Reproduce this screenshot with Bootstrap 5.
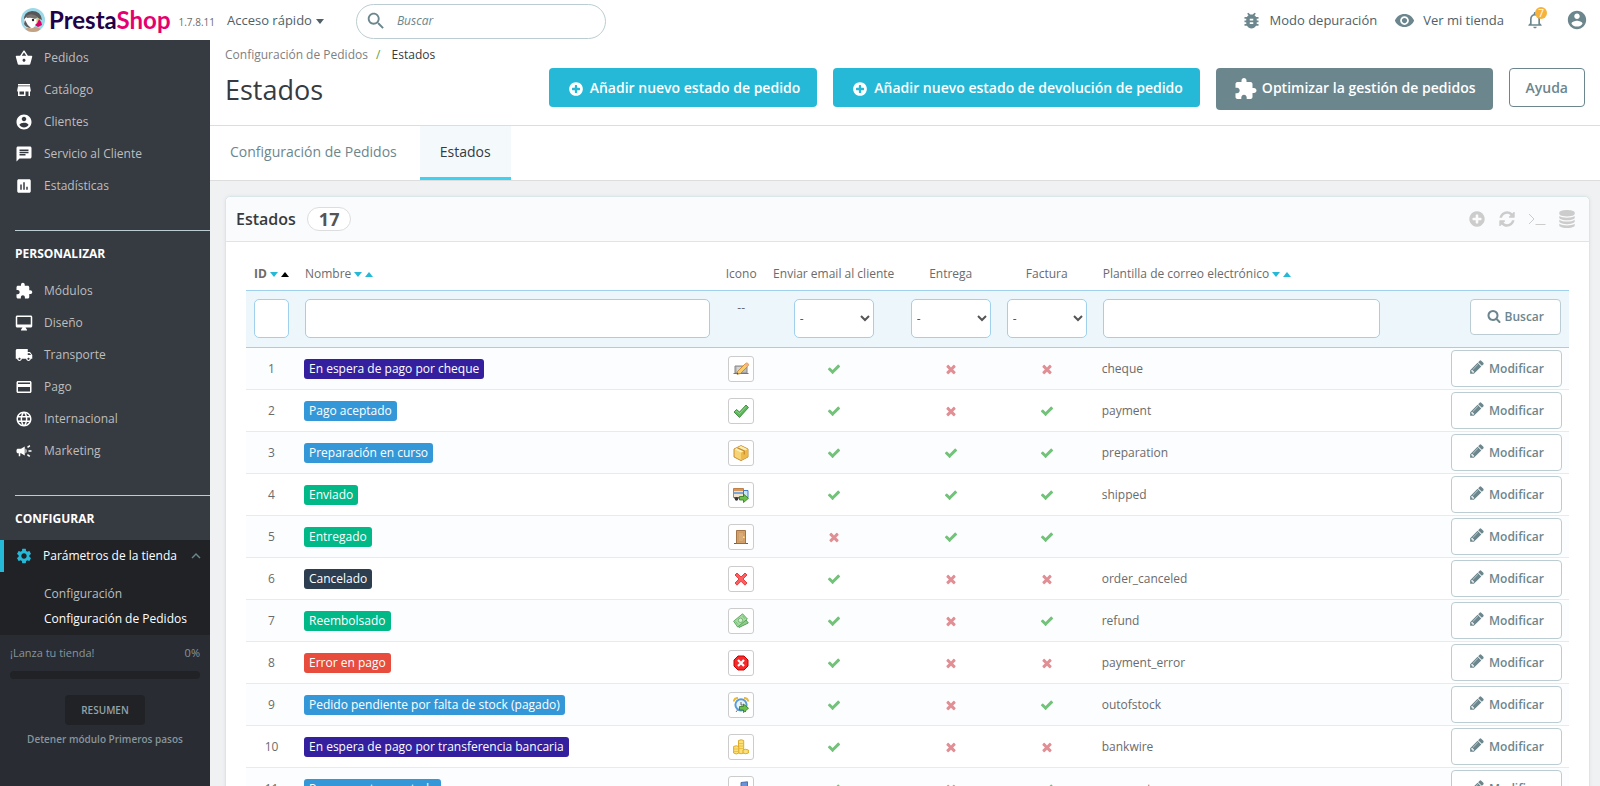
<!DOCTYPE html>
<html lang="es">
<head>
<meta charset="utf-8">
<meta name="viewport" content="width=device-width, initial-scale=1">
<title>Estados • PrestaShop</title>
<link href="https://cdn.jsdelivr.net/npm/bootstrap@5.3.0/dist/css/bootstrap.min.css" rel="stylesheet">
<style>
:root { --slate: #6c868e; --cyan: #25b9d7; --line: #bbcdd2; --side: #363a41; }
body { font-family: "Open Sans", "Noto Sans", sans-serif; font-size: 12px; line-height: 18px; color: #6b6b6b; background: #eff1f2; }
a { text-decoration: none; color: inherit; }
svg { fill: currentColor; flex: none; }
.btn { --bs-btn-font-size: 14px; --bs-btn-line-height: 21px; --bs-btn-font-weight: 600; --bs-btn-border-radius: 4px; white-space: nowrap; }

/* Top bar */
.topbar { height: 40px; background: #fff; color: #4e6167; font-size: 13px; }
.topbar svg { color: var(--slate); }
.topbar nav { gap: 17px; padding-right: 12px; }
.wordmark { font: 700 24px/24px Lato, sans-serif; color: #1f0249; }
.wordmark span { color: #e6006f; }
.version { font-size: 10px; color: #6b6b6b; margin: 0 12px 0 8px; }
.quick { border: 0; background: none; padding: 0; color: #4e6167; }
.quick::after { vertical-align: 1px; margin-left: 4px; border-width: 4px; border-top-width: 5px; border-bottom: 0; }
.finder { width: 250px; height: 35px; border: 1px solid var(--line); border-radius: 18px; background: #fff; margin: 2px 0 0 32px; }
.finder input { border: 0; outline: 0; width: 100%; font-size: 12px; font-style: italic; background: none; }
.finder input::placeholder { color: var(--slate); }
.count { top: -3px; right: -2px; width: 12px; height: 12px; border-radius: 50%; background: #f7b23c; color: #fff; font-size: 10px; line-height: 12px; }

/* Sidebar */
.side { width: 210px; background: var(--side); color: #bebebe; padding-top: 2px; }
.side .entry { display: flex; align-items: center; gap: 11px; height: 32px; padding-left: 15px; white-space: nowrap; }
.side .entry svg { color: #fff; }
.side h2 { font-size: 12px; line-height: 18px; font-weight: 700; color: #fff; margin: 28px 0 0 15px; padding: 14px 0 12px; border-top: 1px solid var(--line); text-transform: uppercase; }
.side .current { background: #202226; }
.side .current .entry { gap: 10px; color: #fff; border-left: 4px solid var(--cyan); padding: 0 5px 0 11px; }
.side .current .entry .gear { color: var(--cyan); }
.side .current .entry .fold { color: var(--slate); }
.side .subs { padding: 9px 0 4px 44px; line-height: 25px; }
.start { background: #292c33; color: #86969c; padding: 9px 10px; font-size: 11px; }
.start .meter { height: 8px; border-radius: 4px; background: #202226; margin: 9px 0 16px; }
.start .btn { --bs-btn-bg: #202226; --bs-btn-color: #93a3a9; --bs-btn-font-size: 10px; --bs-btn-line-height: 16px; width: 80px; }
.start .stop { font-size: 10px; font-weight: 600; margin-top: 5px; }

/* Page heading */
.heading { background: #fff; border-bottom: 1px solid #ddd; padding: 6px 15px 0; height: 86px; }
.crumbs { color: #808080; }
.crumbs .here { color: #363a41; }
.crumbs .bar { color: #5ba13a; margin: 0 8px 0 5px; }
.heading h1 { font-size: 27px; line-height: 38px; font-weight: 400; color: #363a41; margin: 7px 0 0; }
.actions { padding-top: 22px; }
.btn-cyan { --bs-btn-bg: var(--cyan); --bs-btn-color: #fff; --bs-btn-padding-y: 8px; --bs-btn-padding-x: 16px; }
.btn-slate { --bs-btn-bg: var(--slate); --bs-btn-color: #fff; --bs-btn-padding-y: 8px; --bs-btn-padding-x: 16px; }
.btn-help { --bs-btn-bg: #fff; --bs-btn-color: var(--slate); --bs-btn-border-color: var(--slate); --bs-btn-padding-y: 8px; --bs-btn-padding-x: 16px; }
.tabs { background: #fff; border-bottom: 1px solid #ddd; font-size: 14px; color: var(--slate); height: 55px; gap: 3px; }
.tabs a { padding: 15px 20px 0; line-height: 21px; }
.tabs a.on { background: #f4f9fb; color: #363a41; border-bottom: 3px solid #3ed2f0; }

/* Panel */
.panel { margin: 15px 10px 0 15px; border-radius: 5px 5px 0 0; border: 1px solid #dbe6e9; background: #fff; box-shadow: 0 0 4px rgba(0, 0, 0, .06); }
.panel-top { height: 45px; padding: 0 13px 0 10px; background: #fafbfc; border-bottom: 1px solid #dbe6e9; border-radius: 5px 5px 0 0; color: #363a41; }
.panel-top h2 { font-size: 16px; line-height: 24px; font-weight: 600; margin: 0; }
.total { border: 1px solid #ddd; border-radius: 12px; background: #fff; color: #555; font-size: 18px; font-weight: 700; line-height: 22px; padding: 0 11px; margin-left: 11px; }
.tools { color: #ccc; gap: 12px; }
.list-wrap { padding: 0 20px; }

/* List of states */
.states { table-layout: fixed; width: 100%; }
.states th { font-weight: 400; height: 48px; padding: 15px 8px 0; vertical-align: top; white-space: nowrap; line-height: 33px; }
.states td { padding: 0 7px; height: 42px; border-bottom: 1px solid #e6ebee; }
.states .filter td { height: 57px; padding: 8px; background: #ecf6fb; border-top: 1px solid #a0d0eb; border-bottom: 1px solid #a0d0eb; vertical-align: top; }
.states tbody tr:nth-child(odd) td { background: #fcfdfe; }
.states .field { display: block; width: 100%; height: 39px; border: 1px solid #a0d0eb; border-radius: 5px; background: #fff; color: #555; padding: 0 4px; }
.states select.field { width: 80px; padding: 0 1px; margin: 0 auto; }
.c-id { width: 51px; } .c-name { width: 31.8%; } .c-icon { width: 47px; } .c-mail { width: 138px; }
.c-flag { width: 96px; } .c-tpl { width: 22.2%; }
.state { display: inline-block; color: #fff; border-radius: 3px; padding: 1px 5px; vertical-align: middle; }
.pic { display: inline-flex; width: 26px; height: 26px; border: 1px solid #ccc; border-radius: 3px; background: #fff; align-items: center; justify-content: center; vertical-align: middle; }
.yes { color: #72c279; } .no { color: #e08f95; }
.btn-row { --bs-btn-bg: #fff; --bs-btn-color: var(--slate); --bs-btn-border-color: var(--line); --bs-btn-font-size: 12px; --bs-btn-line-height: 18px; --bs-btn-padding-y: 8px; --bs-btn-padding-x: 16px; }
.btn-row.wide { --bs-btn-padding-x: 17px; }
.btn-row svg { vertical-align: -2px; }
.up, .down { display: inline-block; border: 4px solid transparent; color: var(--cyan); margin-left: 3px; vertical-align: middle; height: 0; width: 0; }
.down { border-top: 5px solid; border-bottom: 0; } .up { border-bottom: 5px solid; border-top: 0; }
.up.now { color: #000; }
</style>
</head>
<body>
<svg class="d-none">
  <symbol id="basket" viewBox="0 0 24 24"><path d="M17.21 9l-4.38-6.56c-.19-.28-.51-.42-.83-.42-.32 0-.64.14-.83.43L6.79 9H2c-.55 0-1 .45-1 1 0 .09.01.18.04.27l2.54 9.27c.23.84 1 1.46 1.92 1.46h13c.92 0 1.69-.62 1.93-1.46l2.54-9.27L23 10c0-.55-.45-1-1-1h-4.79zM9 9l3-4.4L15 9H9zm3 8c-1.1 0-2-.9-2-2s.9-2 2-2 2 .9 2 2-.9 2-2 2z"/></symbol>
  <symbol id="store" viewBox="0 0 24 24"><path d="M20 4H4v2h16V4zm1 10v-2l-1-5H4l-1 5v2h1v6h10v-6h4v6h2v-6h1zm-9 4H6v-4h6v4z"/></symbol>
  <symbol id="person" viewBox="0 0 24 24"><path d="M12 2C6.48 2 2 6.48 2 12s4.48 10 10 10 10-4.48 10-10S17.52 2 12 2zm0 3c1.66 0 3 1.34 3 3s-1.34 3-3 3-3-1.34-3-3 1.34-3 3-3zm0 14.2c-2.5 0-4.71-1.28-6-3.22.03-1.99 4-3.08 6-3.08 1.99 0 5.97 1.09 6 3.08-1.29 1.94-3.5 3.22-6 3.22z"/></symbol>
  <symbol id="chat" viewBox="0 0 24 24"><path d="M20 2H4c-1.1 0-1.99.9-1.99 2L2 22l4-4h14c1.1 0 2-.9 2-2V4c0-1.1-.9-2-2-2zM6 9h12v2H6V9zm8 5H6v-2h8v2zm4-6H6V6h12v2z"/></symbol>
  <symbol id="stats" viewBox="0 0 24 24"><path d="M19 3H5c-1.1 0-2 .9-2 2v14c0 1.1.9 2 2 2h14c1.1 0 2-.9 2-2V5c0-1.1-.9-2-2-2zM9 17H7v-7h2v7zm4 0h-2V7h2v10zm4 0h-2v-4h2v4z"/></symbol>
  <symbol id="puzzle" viewBox="0 0 24 24"><path d="M20.5 11H19V7c0-1.1-.9-2-2-2h-4V3.500C13 2.120 11.880 1 10.500 1S8 2.120 8 3.500V5H4c-1.100 0-1.990.9-1.990 2v3.800H3.500c1.490 0 2.700 1.210 2.700 2.700s-1.210 2.700-2.700 2.700H2V20c0 1.100.9 2 2 2h3.800v-1.500c0-1.490 1.210-2.700 2.700-2.700 1.490 0 2.700 1.210 2.700 2.700V22H17c1.100 0 2-.9 2-2v-4h1.500c1.380 0 2.500-1.120 2.500-2.500S21.880 11 20.500 11z"/></symbol>
  <symbol id="desktop" viewBox="0 0 24 24"><path d="M21 2H3c-1.100 0-2 .9-2 2v12c0 1.100.9 2 2 2h7l-2 3v1h8v-1l-2-3h7c1.100 0 2-.9 2-2V4c0-1.100-.9-2-2-2zm0 12H3V4h18v10z"/></symbol>
  <symbol id="truck" viewBox="0 0 24 24"><path d="M20 8h-3V4H3c-1.100 0-2 .9-2 2v11h2c0 1.660 1.340 3 3 3s3-1.340 3-3h6c0 1.660 1.340 3 3 3s3-1.340 3-3h2v-5l-3-4zM6 18.500c-.83 0-1.500-.67-1.500-1.500s.67-1.500 1.500-1.500 1.500.67 1.500 1.500-.67 1.500-1.500 1.500zm13.500-9l1.960 2.500H17V9.500h2.500zm-1.500 9c-.83 0-1.500-.67-1.500-1.500s.67-1.500 1.500-1.500 1.500.67 1.500 1.500-.67 1.500-1.500 1.500z"/></symbol>
  <symbol id="cardpay" viewBox="0 0 24 24"><path d="M20 4H4c-1.110 0-1.990.89-1.990 2L2 18c0 1.110.89 2 2 2h16c1.110 0 2-.89 2-2V6c0-1.110-.89-2-2-2zm0 14H4v-6h16v6zm0-10H4V6h16v2z"/></symbol>
  <symbol id="globe" viewBox="0 0 24 24"><path d="M11.990 2C6.470 2 2 6.480 2 12s4.470 10 9.990 10C17.520 22 22 17.520 22 12S17.520 2 11.990 2zm6.930 6h-2.950c-.32-1.250-.78-2.450-1.380-3.560 1.840.63 3.370 1.910 4.330 3.560zM12 4.040c.83 1.200 1.480 2.530 1.910 3.960h-3.820c.43-1.430 1.080-2.760 1.910-3.960zM4.260 14C4.100 13.360 4 12.690 4 12s.1-1.360.26-2h3.380c-.08.66-.14 1.320-.14 2 0 .68.06 1.340.14 2H4.260zm.82 2h2.950c.32 1.250.78 2.450 1.380 3.560-1.840-.63-3.370-1.900-4.330-3.560zm2.950-8H5.080c.96-1.660 2.490-2.930 4.330-3.560C8.810 5.550 8.350 6.750 8.030 8zM12 19.960c-.83-1.200-1.480-2.530-1.910-3.960h3.820c-.43 1.430-1.080 2.760-1.910 3.960zM14.340 14H9.660c-.09-.66-.16-1.320-.16-2 0-.68.07-1.350.16-2h4.680c.09.65.16 1.320.16 2 0 .68-.07 1.340-.16 2zm.25 5.560c.6-1.110 1.060-2.310 1.380-3.560h2.950c-.96 1.650-2.490 2.930-4.330 3.560zM16.360 14c.08-.66.14-1.320.14-2 0-.68-.06-1.340-.14-2h3.380c.16.64.26 1.310.26 2s-.1 1.360-.26 2h-3.380z"/></symbol>
  <symbol id="horn" viewBox="0 0 24 24"><path d="M18 11v2h4v-2h-4zm-2 6.610c.96.71 2.210 1.650 3.200 2.390.4-.53.8-1.070 1.200-1.600-.99-.74-2.240-1.680-3.200-2.400-.4.54-.8 1.080-1.200 1.610zM20.400 5.600c-.4-.53-.8-1.070-1.200-1.600-.99.74-2.240 1.680-3.200 2.400.4.53.8 1.070 1.200 1.600.96-.72 2.210-1.650 3.200-2.400zM4 9c-1.100 0-2 .9-2 2v2c0 1.100.9 2 2 2h1v4h2v-4h1l5 3V6L8 9H4zm11.500 3c0-1.330-.58-2.530-1.500-3.350v6.690c.92-.81 1.500-2.010 1.500-3.340z"/></symbol>
  <symbol id="gear" viewBox="0 0 24 24"><path d="M19.140 12.940c.04-.3.06-.61.06-.94 0-.32-.02-.64-.07-.94l2.030-1.580c.18-.14.23-.41.12-.61l-1.920-3.320c-.12-.22-.37-.29-.59-.22l-2.390.96c-.5-.38-1.030-.7-1.620-.94l-.36-2.540c-.04-.24-.24-.41-.48-.41h-3.840c-.24 0-.43.17-.47.41l-.36 2.540c-.59.24-1.130.57-1.620.94l-2.390-.96c-.22-.08-.47 0-.59.22L2.740 8.870c-.12.21-.08.47.12.61l2.030 1.580c-.05.3-.09.63-.09.94s.02.64.07.94l-2.030 1.580c-.18.14-.23.41-.12.61l1.920 3.320c.12.22.37.29.59.22l2.390-.96c.5.38 1.030.7 1.620.94l.36 2.540c.05.24.24.41.48.41h3.840c.24 0 .44-.17.47-.41l.36-2.540c.59-.24 1.130-.56 1.620-.94l2.390.96c.22.08.47 0 .59-.22l1.920-3.320c.12-.22.07-.47-.12-.61l-2.010-1.580zM12 15.600c-1.980 0-3.600-1.620-3.600-3.600s1.620-3.600 3.600-3.600 3.600 1.620 3.600 3.600-1.620 3.600-3.600 3.600z"/></symbol>
  <symbol id="fold" viewBox="0 0 24 24"><path d="M12 8l-6 6 1.410 1.410L12 10.830l4.590 4.580L18 14z"/></symbol>
  <symbol id="lens" viewBox="0 0 24 24"><path d="M15.500 14h-.79l-.28-.27C15.410 12.590 16 11.110 16 9.500 16 5.910 13.090 3 9.500 3S3 5.910 3 9.500 5.910 16 9.500 16c1.610 0 3.090-.59 4.230-1.570l.27.28v.79l5 4.990L20.490 19l-4.990-5zm-6 0C7.010 14 5 11.990 5 9.500S7.010 5 9.500 5 14 7.010 14 9.500 11.990 14 9.500 14z"/></symbol>
  <symbol id="bug" viewBox="0 0 24 24"><path d="M20 8h-2.810c-.45-.78-1.070-1.450-1.820-1.960L17 4.410 15.590 3l-2.170 2.170C12.960 5.060 12.490 5 12 5c-.49 0-.96.06-1.410.17L8.410 3 7 4.410l1.620 1.630C7.880 6.550 7.260 7.220 6.810 8H4v2h2.090c-.05.33-.09.66-.09 1v1H4v2h2v1c0 .34.04.67.09 1H4v2h2.810c1.040 1.790 2.970 3 5.190 3s4.150-1.210 5.190-3H20v-2h-2.090c.05-.33.09-.66.09-1v-1h2v-2h-2v-1c0-.34-.04-.67-.09-1H20V8zm-6 8h-4v-2h4v2zm0-4h-4v-2h4v2z"/></symbol>
  <symbol id="eye" viewBox="0 0 24 24"><path d="M12 4.500C7 4.500 2.730 7.610 1 12c1.730 4.390 6 7.500 11 7.500s9.270-3.110 11-7.500c-1.730-4.390-6-7.500-11-7.500zM12 17c-2.760 0-5-2.240-5-5s2.240-5 5-5 5 2.240 5 5-2.240 5-5 5zm0-8c-1.660 0-3 1.340-3 3s1.340 3 3 3 3-1.340 3-3-1.340-3-3-3z"/></symbol>
  <symbol id="bell" viewBox="0 0 24 24"><path d="M12 22c1.100 0 2-.9 2-2h-4c0 1.100.89 2 2 2zm6-6v-5c0-3.070-1.640-5.640-4.500-6.320V4c0-.83-.67-1.500-1.500-1.500s-1.500.67-1.500 1.500v.68C7.630 5.360 6 7.920 6 11v5l-2 2v1h16v-1l-2-2zm-2 1H8v-6c0-2.480 1.510-4.500 4-4.500s4 2.020 4 4.500v6z"/></symbol>
  <symbol id="check" viewBox="0 0 1792 1792"><path d="M1671 566q0 40-28 68l-724 724-136 136q-28 28-68 28t-68-28l-136-136-362-362q-28-28-28-68t28-68l136-136q28-28 68-28t68 28l294 295 656-657q28-28 68-28t68 28l136 136q28 28 28 68z"/></symbol>
  <symbol id="cross" viewBox="0 0 1792 1792"><path d="M1490 1322q0 40-28 68l-136 136q-28 28-68 28t-68-28l-294-294-294 294q-28 28-68 28t-68-28l-136-136q-28-28-28-68t28-68l294-294-294-294q-28-28-28-68t28-68l136-136q28-28 68-28t68 28l294 294 294-294q28-28 68-28t68 28l136 136q28 28 28 68t-28 68l-294 294 294 294q28 28 28 68z"/></symbol>
  <symbol id="plus" viewBox="0 0 1792 1792"><path d="M1344 960v-128q0-26-19-45t-45-19h-256v-256q0-26-19-45t-45-19h-128q-26 0-45 19t-19 45v256h-256q-26 0-45 19t-19 45v128q0 26 19 45t45 19h256v256q0 26 19 45t45 19h128q26 0 45-19t19-45v-256h256q26 0 45-19t19-45zm320-64q0 209-103 385.500t-279.500 279.500-385.500 103-385.500-103-279.500-279.500-103-385.500 103-385.500 279.500-279.500 385.500-103 385.500 103 279.500 279.500 103 385.500z"/></symbol>
  <symbol id="find" viewBox="0 0 1792 1792"><path d="M1216 832q0-185-131.500-316.500t-316.500-131.500-316.500 131.500-131.500 316.500 131.500 316.500 316.500 131.500 316.500-131.500 131.500-316.500zm512 832q0 52-38 90t-90 38q-54 0-90-38l-343-342q-179 124-399 124-143 0-273.500-55.500t-225-150-150-225-55.500-273.500 55.500-273.500 150-225 225-150 273.500-55.500 273.500 55.500 225 150 150 225 55.500 273.500q0 220-124 399l343 343q37 37 37 90z"/></symbol>
  <symbol id="pencil" viewBox="0 0 1792 1792"><path d="M491 1536l91-91-235-235-91 91v107h128v128h107zm523-928q0-22-22-22-10 0-17 7l-542 542q-7 7-7 17 0 22 22 22 10 0 17-7l542-542q7-7 7-17zm-54-192l416 416-832 832h-416v-416zm683 96q0 53-37 90l-166 166-416-416 166-165q36-38 90-38 53 0 91 38l235 234q37 39 37 91z"/></symbol>
  <symbol id="reload" viewBox="0 0 1792 1792"><path d="M1639 1056q0 5-1 7-64 268-268 434.500t-478 166.500q-146 0-282.500-55t-243.500-157l-129 129q-19 19-45 19t-45-19-19-45v-448q0-26 19-45t45-19h448q26 0 45 19t19 45-19 45l-137 137q71 66 161 102t187 36q134 0 250-65t186-179q11-17 53-117 8-23 30-23h192q13 0 22.500 9.500t9.500 22.500zm25-800v448q0 26-19 45t-45 19h-448q-26 0-45-19t-19-45 19-45l138-138q-148-137-349-137-134 0-250 65t-186 179q-11 17-53 117-8 23-30 23h-199q-13 0-22.500-9.500t-9.500-22.500v-7q65-268 270-434.500t480-166.500q146 0 284 55.500t245 156.500l130-129q19-19 45-19t45 19 19 45z"/></symbol>
  <symbol id="data" viewBox="0 0 1792 1792"><path d="M896 768q237 0 443-43t325-127v170q0 69-103 128t-280 93.500-385 34.500-385-34.500-280-93.500-103-128v-170q119 84 325 127t443 43zm0 768q237 0 443-43t325-127v170q0 69-103 128t-280 93.500-385 34.500-385-34.500-280-93.500-103-128v-170q119 84 325 127t443 43zm0-384q237 0 443-43t325-127v170q0 69-103 128t-280 93.500-385 34.500-385-34.500-280-93.500-103-128v-170q119 84 325 127t443 43zm0-1152q208 0 385 34.500t280 93.500 103 128v128q0 69-103 128t-280 93.500-385 34.500-385-34.500-280-93.500-103-128v-128q0-69 103-128t280-93.500 385-34.500z"/></symbol>
  <symbol id="prompt" viewBox="0 0 18 18"><path d="M1 4l5 5-5 5M7.500 14.500h10" fill="none" stroke="currentColor" stroke-width="1"/></symbol>

  <symbol id="p-cheque" viewBox="0 0 16 16"><path d="M2 5h12v7H2z" fill="#bdbdbd" stroke="#888"/><path d="M.5 12.500h15" stroke="#777"/><path d="M4 7h6M4 9h4" stroke="#eee"/><path d="M4.500 10.500l8-8q1.500-1 2.500 0t0 2.500l-7.500 7.500-3.500.8z" fill="#f8cd6a" stroke="#c77f1e" stroke-width=".8"/><path d="M12.500 2.500q1.500-1 2.500 0t0 2.500l-1 1-2.500-2.500z" fill="#f3b08a"/><path d="M4 13.300l.4-1.600 1.200 1.300z" fill="#333"/></symbol>
  <symbol id="p-accept" viewBox="0 0 16 16"><path d="M1 9l2.500-2.500L6.500 9 13 2l2.500 2.500-9 10z" fill="#5cb85a" stroke="#2d7d2c" stroke-width=".8"/><path d="M2.500 9l1-1 3 2.600L13 3.500" fill="none" stroke="#9fdc9a" stroke-width=".8"/></symbol>
  <symbol id="p-box" viewBox="0 0 16 16"><path d="M8 .6l7 3.400v8l-7 3.600L1 12V4z" fill="#f6d375" stroke="#bf8526" stroke-width=".9"/><path d="M8 7.500V15l6.500-3.300V4.300z" fill="#eeb948"/><path d="M8 1l6.500 3.200L8 7.500 1.500 4.200z" fill="#fdeeb5"/><path d="M4.500 2.800L11.300 6v3.500" fill="none" stroke="#c98f2d" stroke-width="1.300"/></symbol>
  <symbol id="p-ship" viewBox="0 0 16 16"><path d="M.5 1.500h10v9H.5z" fill="#f2e2cb" stroke="#b87333" stroke-width=".9"/><path d="M1 2h9v2H1z" fill="#d8965a"/><path d="M1 6h9" stroke="#4a8fd8" stroke-width="1.400"/><path d="M10.500 3.500h4.500v7h-4.500z" fill="#cfe4fa" stroke="#2f73c2" stroke-width=".9"/><path d="M1 11h9" stroke="#333"/><circle cx="3.500" cy="12" r="1.700" fill="#333"/><path d="M6.500 9.500h4V7l5 4.300-5 4.200V13h-4z" fill="#6cc04a" stroke="#2c7a1c" stroke-width=".8"/></symbol>
  <symbol id="p-door" viewBox="0 0 16 16"><path d="M1 14.500h14" stroke="#7a5a3a"/><path d="M3.500 1.500h9v13h-9z" fill="#d3a26b" stroke="#9b6a39" stroke-width=".9"/><path d="M5.500 3.500h5v9h-5z" fill="#d9ab76" stroke="#c99660" stroke-width=".5"/><circle cx="10.800" cy="8.200" r="1" fill="#ffdf4f"/></symbol>
  <symbol id="p-cancel" viewBox="0 0 16 16"><path d="M2 4l2-2 4 4 4-4 2 2-4 4 4 4-2 2.200-4-4-4 4L2 12l4-4z" fill="#fb5f5f" stroke="#e03535" stroke-width=".9" stroke-linejoin="round"/></symbol>
  <symbol id="p-money" viewBox="0 0 16 16"><path d="M2 9L11.500 5l3.800 5L6 14.500z" fill="#8fce8b" stroke="#3f8f46" stroke-width=".8"/><path d="M.6 8.200L9.600.8l4.800 5.200L4.600 14z" fill="#a7dba0" stroke="#4a9b4f" stroke-width=".8"/><circle cx="7.500" cy="7.300" r="2.200" fill="#d4efcf" stroke="#4a9b4f" stroke-width=".6"/><path d="M2.500 8.500l2.500 3M9.500 2.800l2.500 3" stroke="#6cb56e" stroke-width=".8"/></symbol>
  <symbol id="p-error" viewBox="0 0 16 16"><path d="M5 1h6l4 4v6l-4 4H5l-4-4V5z" fill="#f52a2a" stroke="#c80000"/><path d="M5 5l6 6M11 5l-6 6" stroke="#fff" stroke-width="2.200"/></symbol>
  <symbol id="p-clock" viewBox="0 0 16 16"><path d="M.8 4.500Q1 1 5 .9M15.200 4.500Q15 1 11 .9" fill="none" stroke="#e9b93f" stroke-width="2"/><path d="M3 15l2-2.500M13 15l-2-2" stroke="#777"/><circle cx="8" cy="7.800" r="5.600" fill="#e9f3fc" stroke="#5c9bd8" stroke-width="2"/><path d="M8 5v3h2.500" fill="none" stroke="#444" stroke-width=".8"/><path d="M6.500 9.500h4V7l5 4.300-5 4.200V13h-4z" fill="#6cc04a" stroke="#2c7a1c" stroke-width=".8"/></symbol>
  <symbol id="p-coins" viewBox="0 0 16 16"><g fill="#fbe07a" stroke="#d9a41c" stroke-width=".9"><path d="M5.500 1.500q2.700-1.500 5.200 0V14q-2.600 1.600-5.200 0z"/><path d="M.6 7.500q2.700-1.500 5.200 0V14q-2.600 2-5.200 0z"/><path d="M10 11q2.700-1.500 5.400 0v3q-2.700 1.600-5.400 0z"/></g><path d="M6 4.500h4.300M6 7h4.300M6 9.500h4.300M1 10h4.500M1 12.500h4.500" stroke="#e7ba3a" stroke-width=".8"/></symbol>
  <symbol id="p-remote" viewBox="0 0 16 16"><path d="M8 1.500L14.500.8v5.500L8 9z" fill="#6d93d6" stroke="#3f66ad" stroke-width=".9"/><path d="M2 7h9v7H2z" fill="#9ab7e6" stroke="#3f66ad"/></symbol>
</svg>

<div class="vh-100 d-flex flex-column overflow-hidden">
  <header class="topbar d-flex align-items-center flex-shrink-0">
    <a href="#" class="d-flex align-items-center">
      <svg class="ms-3" width="33" height="26" viewBox="-5 -1 33 26"><clipPath id="disc"><circle cx="12" cy="12" r="12"/></clipPath><g clip-path="url(#disc)"><path d="M0 0h24v24H0z" fill="#9bd9e8"/><path d="M2 24q2-5 10-5t10 5z" fill="#c3a384"/><path d="M3 13Q2 4 11 3q9 0 10 9-5-3-9-2-5-1-7 5z" fill="#54565a"/><path d="M3 12q2-4 6-3 6-1 7 4-1 5-4 7-6 1-8-2z" fill="#fff"/><path d="M4 12q2 5 6 8-5 0-7-4z" fill="#5b5d61"/><path d="M5 8q6-4 12 1l-3 2q-4-2-8-1z" fill="#77726d"/><circle cx="12" cy="12" r="1.200" fill="#222"/><path d="M16 9l2 2-1 4-1 2q-1-4 0-8z" fill="#f6c244"/><path d="M18 11q3 3 3 6l-4 2-3-2q3-2 4-6z" fill="#df0067"/></g></svg>
      <span class="wordmark">Presta<span>Shop</span></span>
    </a>
    <span class="version pt-1">1.7.8.11</span>
    <button type="button" class="quick dropdown-toggle">Acceso rápido</button>
    <form class="finder d-flex align-items-center px-2 gap-2" role="search">
      <svg width="22" height="22"><use href="#lens"/></svg>
      <input type="search" placeholder="Buscar" aria-label="Buscar">
    </form>
    <nav class="d-flex align-items-center ms-auto">
      <a href="#" class="d-flex align-items-center gap-2"><svg width="21" height="21"><use href="#bug"/></svg>Modo depuración</a>
      <a href="#" class="d-flex align-items-center gap-2"><svg width="21" height="21"><use href="#eye"/></svg>Ver mi tienda</a>
      <a href="#" class="position-relative ms-1 me-1" aria-label="Notificaciones"><svg width="20" height="20"><use href="#bell"/></svg><span class="count position-absolute text-center">7</span></a>
      <a href="#" aria-label="Cuenta"><svg width="22" height="22"><use href="#person"/></svg></a>
    </nav>
  </header>

  <div class="d-flex flex-fill overflow-hidden">
    <aside class="side d-flex flex-column flex-shrink-0">
      <nav>
        <a href="#" class="entry"><svg width="18" height="18"><use href="#basket"/></svg>Pedidos</a>
        <a href="#" class="entry"><svg width="18" height="18"><use href="#store"/></svg>Catálogo</a>
        <a href="#" class="entry"><svg width="18" height="18"><use href="#person"/></svg>Clientes</a>
        <a href="#" class="entry"><svg width="18" height="18"><use href="#chat"/></svg>Servicio al Cliente</a>
        <a href="#" class="entry"><svg width="18" height="18"><use href="#stats"/></svg>Estadísticas</a>
        <h2>Personalizar</h2>
        <a href="#" class="entry"><svg width="18" height="18"><use href="#puzzle"/></svg>Módulos</a>
        <a href="#" class="entry"><svg width="18" height="18"><use href="#desktop"/></svg>Diseño</a>
        <a href="#" class="entry"><svg width="18" height="18"><use href="#truck"/></svg>Transporte</a>
        <a href="#" class="entry"><svg width="18" height="18"><use href="#cardpay"/></svg>Pago</a>
        <a href="#" class="entry"><svg width="18" height="18"><use href="#globe"/></svg>Internacional</a>
        <a href="#" class="entry"><svg width="18" height="18"><use href="#horn"/></svg>Marketing</a>
        <h2>Configurar</h2>
        <div class="current">
          <a href="#" class="entry"><svg class="gear" width="18" height="18"><use href="#gear"/></svg>Parámetros de la tienda<svg class="fold ms-auto" width="18" height="18"><use href="#fold"/></svg></a>
          <div class="subs"><a href="#" class="d-block">Configuración</a><a href="#" class="d-block text-white">Configuración de Pedidos</a></div>
        </div>
      </nav>
      <div class="start flex-fill text-center">
        <div class="d-flex justify-content-between"><span>¡Lanza tu tienda!</span><span>0%</span></div>
        <div class="meter"></div>
        <button type="button" class="btn">RESUMEN</button>
        <a href="#" class="stop d-block">Detener módulo Primeros pasos</a>
      </div>
    </aside>

    <main class="flex-fill overflow-hidden">
      <div class="heading d-flex justify-content-between">
        <div>
          <nav class="crumbs"><a href="#">Configuración de Pedidos</a> <span class="bar">/</span> <a href="#" class="here">Estados</a></nav>
          <h1>Estados</h1>
        </div>
        <div class="actions d-flex align-items-start gap-3">
          <a href="#" class="btn btn-cyan"><svg class="me-1" width="20" height="16"><use href="#plus"/></svg>Añadir nuevo estado de pedido</a>
          <a href="#" class="btn btn-cyan"><svg class="me-1" width="20" height="16"><use href="#plus"/></svg>Añadir nuevo estado de devolución de pedido</a>
          <a href="#" class="btn btn-slate"><svg class="me-1" width="25" height="24"><use href="#puzzle"/></svg>Optimizar la gestión de pedidos</a>
          <a href="#" class="btn btn-help">Ayuda</a>
        </div>
      </div>
      <nav class="tabs d-flex"><a href="#">Configuración de Pedidos</a><a href="#" class="on">Estados</a></nav>

      <section class="panel">
        <div class="panel-top d-flex align-items-center">
          <h2>Estados</h2><span class="total">17</span>
          <div class="tools d-flex align-items-center ms-auto">
            <a href="#" aria-label="Añadir"><svg width="18" height="18"><use href="#plus"/></svg></a>
            <a href="#" aria-label="Recargar"><svg width="18" height="18"><use href="#reload"/></svg></a>
            <a href="#" aria-label="Mostrar SQL"><svg width="18" height="18"><use href="#prompt"/></svg></a>
            <a href="#" aria-label="Exportar SQL"><svg width="18" height="18"><use href="#data"/></svg></a>
          </div>
        </div>
        <div class="list-wrap">
          <table class="states">
            <colgroup><col class="c-id"><col class="c-name"><col class="c-icon"><col class="c-mail"><col class="c-flag"><col class="c-flag"><col class="c-tpl"><col></colgroup>
            <thead>
              <tr>
                <th><b>ID</b><a href="#" class="down" aria-label="Descendente"></a><a href="#" class="up now" aria-label="Ascendente"></a></th>
                <th>Nombre<a href="#" class="down" aria-label="Descendente"></a><a href="#" class="up" aria-label="Ascendente"></a></th>
                <th class="text-center">Icono</th>
                <th class="text-center">Enviar email al cliente</th>
                <th class="text-center">Entrega</th>
                <th class="text-center">Factura</th>
                <th>Plantilla de correo electrónico<a href="#" class="down" aria-label="Descendente"></a><a href="#" class="up" aria-label="Ascendente"></a></th>
                <th></th>
              </tr>
              <tr class="filter">
                <td><input class="field" type="text" aria-label="ID"></td>
                <td><input class="field" type="text" aria-label="Nombre"></td>
                <td class="text-center">--</td>
                <td><select class="field" aria-label="Enviar email al cliente"><option>-</option></select></td>
                <td><select class="field" aria-label="Entrega"><option>-</option></select></td>
                <td><select class="field" aria-label="Factura"><option>-</option></select></td>
                <td><input class="field" type="text" aria-label="Plantilla de correo electrónico"></td>
                <td class="text-end"><button type="button" class="btn btn-row"><svg class="me-1" width="14" height="14"><use href="#find"/></svg>Buscar</button></td>
              </tr>
            </thead>
            <tbody id="rows"></tbody>
          </table>
        </div>
      </section>
    </main>
  </div>
</div>
<script>
const states = [
  ['En espera de pago por cheque', '#34209e', 'cheque', 1, 0, 0, 'cheque'],
  ['Pago aceptado', '#3498d8', 'accept', 1, 0, 1, 'payment'],
  ['Preparación en curso', '#3498d8', 'box', 1, 1, 1, 'preparation'],
  ['Enviado', '#01b887', 'ship', 1, 1, 1, 'shipped'],
  ['Entregado', '#01b887', 'door', 0, 1, 1, ''],
  ['Cancelado', '#2c3e50', 'cancel', 1, 0, 0, 'order_canceled'],
  ['Reembolsado', '#01b887', 'money', 1, 0, 1, 'refund'],
  ['Error en pago', '#e74c3c', 'error', 1, 0, 0, 'payment_error'],
  ['Pedido pendiente por falta de stock (pagado)', '#3498d8', 'clock', 1, 0, 1, 'outofstock'],
  ['En espera de pago por transferencia bancaria', '#34209e', 'coins', 1, 0, 0, 'bankwire'],
  ['Pago remoto aceptado', '#3498d8', 'remote', 1, 0, 1, 'payment']
];
const flag = on => `<td class="text-center"><svg class="${on ? 'yes' : 'no'}" width="14" height="14"><use href="#${on ? 'check' : 'cross'}"/></svg></td>`;
document.getElementById('rows').innerHTML = states.map(([name, color, pic, mail, sent, bill, tpl], i) => `
  <tr>
    <td class="text-center">${i + 1}</td>
    <td><span class="state" style="background:${color}">${name}</span></td>
    <td class="text-center"><span class="pic"><svg width="16" height="16"><use href="#p-${pic}"/></svg></span></td>
    ${flag(mail)}${flag(sent)}${flag(bill)}
    <td>${tpl}</td>
    <td class="text-end"><a href="#" class="btn btn-row wide"><svg class="me-1" width="16" height="16"><use href="#pencil"/></svg>Modificar</a></td>
  </tr>`).join('');
</script>
<script src="https://cdn.jsdelivr.net/npm/bootstrap@5.3.0/dist/js/bootstrap.bundle.min.js"></script>
</body>
</html>
